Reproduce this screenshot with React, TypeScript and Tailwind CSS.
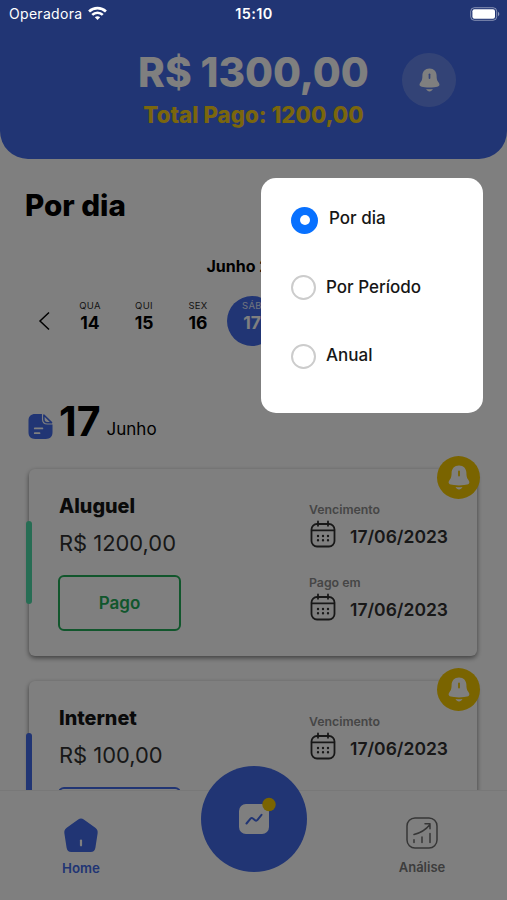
import React, { useState } from 'react';
import clsx from 'clsx';

interface Bill {
  id: string;
  name: string;
  amount: string;
  dueDate: string;
  paidAt: string;
  status: 'Pago' | 'Pagar';
}

const BILLS: Bill[] = [
  { id: 'aluguel', name: 'Aluguel', amount: 'R$ 1200,00', dueDate: '17/06/2023', paidAt: '17/06/2023', status: 'Pago' },
  { id: 'internet', name: 'Internet', amount: 'R$ 100,00', dueDate: '17/06/2023', paidAt: '17/06/2023', status: 'Pagar' },
];

const DAYS = [
  { label: 'QUA', day: 14 },
  { label: 'QUI', day: 15 },
  { label: 'SEX', day: 16 },
  { label: 'SÁB', day: 17 },
];

const FILTERS = ['Por dia', 'Por Período', 'Anual'];

const BellIcon = ({ className, clapper }: { className: string; clapper: string }) => (
  <svg viewBox="0 0 24 26" className={className}>
    <path
      fill="currentColor"
      d="M12 1C7.400 1 4.700 4.200 4.600 8.200c0 3-.300 5-1.700 6.900C1.700 16.700 1.200 18 2 19c.8 1 2.600 1.300 5 1.600 3.300.4 6.700.4 10 0 2.400-.3 4.200-.6 5-1.600.8-1 .3-2.300-.9-3.900-1.400-1.900-1.700-3.900-1.700-6.900C19.300 4.200 16.600 1 12 1z"
    />
    <path fill="currentColor" d="M8.500 22.500c2.300.3 4.700.3 7 0-.8 1.500-2 2.500-3.500 2.500s-2.700-1-3.500-2.500z" />
    <path className={clapper} strokeWidth="1.800" strokeLinecap="round" d="M12 7v4" />
  </svg>
);

const CalendarIcon = () => (
  <svg viewBox="0 0 26 28" className="h-7 w-[26px]" fill="none" stroke="currentColor" strokeWidth="1.800" strokeLinecap="round">
    <rect x="1.500" y="4" width="23" height="22.500" rx="5.500" />
    <path d="M1.800 10.300h22.400M8 1.500v4.300M18 1.500v4.300" />
    <path strokeWidth="2.400" d="M8 16h.01M13 16h.01M18 16h.01M8 20.300h.01M13 20.300h.01M18 20.300h.01" />
  </svg>
);

const StatusBar = () => (
  <div className="absolute inset-x-0 top-0 z-20 flex h-[27px] items-center justify-between pl-[9px] pr-[7px] text-white">
    <div className="flex w-40 items-center gap-[6px]">
      <span className="text-[14px] tracking-[0.3px]">Operadora</span>
      <svg viewBox="0 0 18 14" className="h-[15px] w-[19px]" fill="none" stroke="currentColor" strokeWidth="2.500">
        <path d="M1 5.100C5.500.8 12.500.8 17 5.100" />
        <path d="M4 8.300c2.800-2.700 7.200-2.700 10 0" />
        <path d="M6.500 10.600c1.400-1.400 3.600-1.400 5 0L9 13.200z" fill="currentColor" stroke="none" />
      </svg>
    </div>
    <span className="pr-px text-[14.500px] font-semibold tracking-[0.4px]">15:10</span>
    <div className="flex w-40 justify-end">
      <svg viewBox="0 0 30 14" className="h-[14px] w-[30px]">
        <rect x=".7" y=".7" width="26" height="12.600" rx="3.700" fill="none" stroke="white" strokeOpacity=".45" />
        <rect x="2.400" y="2.300" width="22.600" height="9.400" rx="2" fill="white" />
        <path d="M28 4.800c1.800.8 1.800 3.600 0 4.400z" fill="white" fillOpacity=".5" />
      </svg>
    </div>
  </div>
);

const Header = () => (
  <header className="relative h-[159px] shrink-0 rounded-b-[28px] bg-[#426ae8] pt-[49px] text-center">
    <h1 className="text-[40.500px] leading-[48px] font-extrabold text-white">R$ 1300,00</h1>
    <p className="mt-[4px] text-[22.300px] leading-7 font-extrabold text-[#f5cc1b]">Total Pago: 1200,00</p>
    <button className="absolute top-[53px] right-[51px] flex size-[54px] items-center justify-center rounded-full bg-white/20 text-white">
      <BellIcon className="h-[26px] w-[23px]" clapper="stroke-[#6887ed]" />
    </button>
  </header>
);

const DateField = ({ label, value }: { label: string; value: string }) => (
  <div className="h-[72.500px]">
    <p className="text-[12.300px] leading-4 font-semibold text-[#8c8c8c]">{label}</p>
    <div className="mt-[2px] flex items-start gap-[14px] pl-px text-[#303030]">
      <CalendarIcon />
      <span className="pt-[3px] text-[17.500px] leading-7 font-semibold">{value}</span>
    </div>
  </div>
);

const BillCard = ({ bill }: { bill: Bill }) => {
  const paid = bill.status === 'Pago';
  return (
    <article className="relative flex h-[187px] shrink-0 rounded-[6px] bg-white pt-[23px] pl-[30px] shadow-[0_2px_5px_rgba(0,0,0,0.5)]">
      <span className={clsx('absolute top-[52px] -left-[3px] h-[83px] w-[6px] rounded-[3px]', paid ? 'bg-[#4fdba8]' : 'bg-[#426ae8]')} />
      <span className="absolute -top-[13px] -right-[3px] flex size-[43px] items-center justify-center rounded-full bg-[#f5c800] text-white">
        <BellIcon className="h-[27px] w-6" clapper="stroke-[#f5c800]" />
      </span>
      <div className="w-[250px]">
        <h3 className="text-[19.800px] leading-7 font-extrabold text-[#151515]">{bill.name}</h3>
        <p className="mt-[7px] text-[21.900px] leading-8 text-[#303030]">{bill.amount}</p>
        <button
          className={clsx(
            'mt-[16px] -ml-px h-[56px] w-[123px] rounded-[6px] border-2 pt-px text-[17px] font-semibold',
            paid ? 'border-[#23ad58] text-[#23ad58]' : 'border-[#426ae8] text-[#426ae8]'
          )}
        >
          {bill.status}
        </button>
      </div>
      <div className="pt-[10px]">
        <DateField label="Vencimento" value={bill.dueDate} />
        <DateField label="Pago em" value={bill.paidAt} />
      </div>
    </article>
  );
};

const TabBar = () => (
  <nav className="relative flex h-[110px] shrink-0 justify-between border-t border-[#f0f0f0] bg-white">
    <div className="flex w-[162px] flex-col items-center pt-[27px] text-[#426ae8]">
      <svg viewBox="0 0 34 34" className="size-[34px]">
        <path
          fill="currentColor"
          d="M14.200 1.400c1.700-1.200 3.900-1.200 5.600 0l11.500 8.300c2 1.500 2.700 3.300 2.300 5.800l-2.200 14.200c-.4 2.700-2 4.300-4.700 4.300H7.300c-2.700 0-4.300-1.600-4.700-4.300L.4 15.500C0 13 .700 11.200 2.700 9.700z"
        />
        <path stroke="white" strokeWidth="2.200" strokeLinecap="round" d="M17 22.500v4.800" />
      </svg>
      <span className="mt-[6px] text-[13.300px] leading-5 font-semibold">Home</span>
    </div>
    <div className="flex w-[170px] flex-col items-center pt-[26px] text-[#6c6c6c]">
      <svg viewBox="0 0 32 32" className="size-8" fill="none" stroke="currentColor" strokeWidth="1.500" strokeLinecap="round" strokeLinejoin="round">
        <rect x="1" y="1" width="30" height="30" rx="8" />
        <path d="M8 25.500v-2.800M16 25.500v-5.500M24 25.500v-9M8 17.500c6.500-1.500 12-5 16-10M19 6.800h5v5" />
      </svg>
      <span className="mt-[8px] text-[13px] leading-5 font-semibold text-[#7a7a7a]">Análise</span>
    </div>
    {/* center action overlaps the list */}
    <button className="absolute -top-[25px] left-[201px] flex size-[106px] items-center justify-center rounded-full bg-[#426ae8]">
      <svg viewBox="0 0 38 38" className="size-[38px] overflow-visible">
        <rect x="4" y="4" width="30" height="30" rx="7" fill="white" />
        <path d="M11.500 23.500l4-4.800c.7-.8 1.700-.8 2.500-.1l2 1.600c.8.600 1.800.500 2.500-.3l4-5" fill="none" stroke="#426ae8" strokeWidth="2" strokeLinecap="round" />
        <circle cx="34" cy="4.500" r="6.700" fill="#f5c800" />
      </svg>
    </button>
  </nav>
);

const FilterModal = () => {
  const [selected, setSelected] = useState('Por dia');
  return (
    <div className="absolute inset-0 z-10 bg-black/50">
      <div className="absolute top-[178px] left-[261px] flex h-[235px] w-[222px] flex-col rounded-[15px] bg-white pt-[8px] pl-[30px]">
        {FILTERS.map(filter => (
          <button key={filter} onClick={() => setSelected(filter)} className="flex h-[68.500px] items-center gap-[10px] text-left text-[17px] font-medium text-[#161616]">
            {selected === filter ? (
              <span className="mr-px flex size-[27px] items-center justify-center rounded-full bg-[#0871ff]">
                <span className="size-[10px] rounded-full bg-white" />
              </span>
            ) : (
              <span className="-mt-[2px] size-[25px] rounded-full border-2 border-[#ccc]" />
            )}
            <span className="-mt-[3px]">{filter}</span>
          </button>
        ))}
      </div>
    </div>
  );
};

const App: React.FC = () => {
  return (
    <div className="relative flex h-[900px] w-[507px] flex-col overflow-hidden bg-white font-[Inter,sans-serif] text-black">
      <StatusBar />
      <Header />
      <main className="min-h-0 flex-1 overflow-hidden">
        <h2 className="pt-[28px] pl-[25px] text-[29.600px] leading-9 font-extrabold">Por dia</h2>

        <p className="mt-[33px] text-center text-[16px] leading-5 font-bold">Junho 2023</p>
        <div className="mt-[20px] flex h-[50px] items-center pl-[38px]">
          <svg viewBox="0 0 12 20" className="h-5 w-3" fill="none" stroke="currentColor" strokeWidth="1.500">
            <path d="M11 1.500L2 10l9 8.500" />
          </svg>
          <div className="ml-[15px] flex gap-1">
            {DAYS.map(({ label, day }) => (
              <div key={day} className={clsx('flex size-[50px] flex-col items-center rounded-full pt-[4px]', day === 17 && 'bg-[#426ae8] text-white')}>
                <span className="text-[9.500px] leading-3 tracking-[0.300px] opacity-85">{label}</span>
                <span className="mt-px text-[17.500px] leading-5 font-bold">{day}</span>
              </div>
            ))}
          </div>
        </div>

        <div className="mt-[50px] flex items-baseline pl-[28px]">
          <svg viewBox="0 0 25 26" className="relative top-[3px] size-[25px]">
            <path fill="#426ae8" d="M7 0h7v5.500C14 9 16 11 19.500 11H25v8c0 4.500-2.500 7-7 7H7c-4.500 0-7-2.500-7-7V7c0-4.500 2.500-7 7-7z" />
            <path fill="none" stroke="#426ae8" strokeWidth="1.600" strokeLinejoin="round" d="M16 1l8 8h-4.500C17 9 16 8 16 5.500z" />
            <path stroke="white" strokeWidth="1.800" strokeLinecap="round" d="M6.500 15h8M6.500 20h5" />
          </svg>
          <span className="ml-[6px] text-[41px] leading-[50px] font-bold">17</span>
          <span className="relative -top-px ml-[6px] text-[17px]">Junho</span>
        </div>

        <div className="mt-[23px] flex flex-col gap-[25px] pr-[30px] pl-[29px]">
          {BILLS.map(bill => (
            <BillCard key={bill.id} bill={bill} />
          ))}
        </div>
      </main>
      <TabBar />
      <FilterModal />
    </div>
  );
};

export default App;
